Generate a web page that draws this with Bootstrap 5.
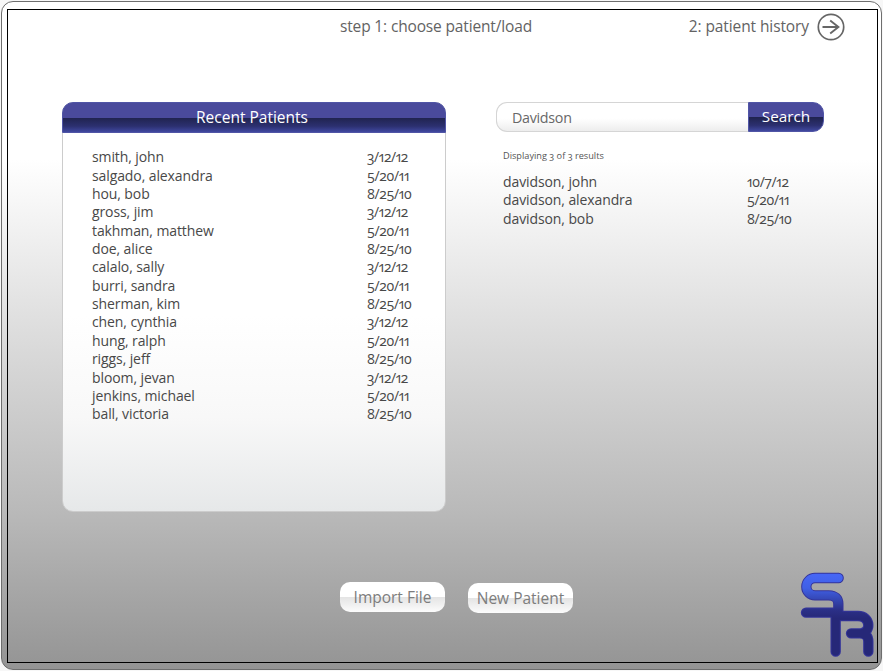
<!DOCTYPE html>
<html lang="en">
<head>
<meta charset="utf-8">
<meta name="viewport" content="width=device-width, initial-scale=1">
<title>Choose patient</title>
<link href="https://cdn.jsdelivr.net/npm/bootstrap@5.3.0/dist/css/bootstrap.min.css" rel="stylesheet">
<style>
body{background:#f7f7f7;font-family:"Open Sans","Noto Sans",sans-serif;color:#484848;height:671px;overflow:hidden;padding:1px}
.frame{width:881px;height:669px;border:1px solid #6e6e6e;border-radius:12px;padding:7px 3px 6px 5px;background:linear-gradient(#fff 0,#fff 158px,#b9b9b9 510px,#949494 668px)}
.screen{height:654px;border:1px solid #000;padding:0 32px 0 54px}
.steps{height:34px;font-size:15.5px;color:#636363}
.step-now{margin-left:278px;width:192px;white-space:nowrap;letter-spacing:-.15px}
.step-next{margin-left:auto;margin-right:8px;white-space:nowrap;letter-spacing:-.1px}
.main-area{margin-top:58px;gap:50px;height:410px}
.recent{width:384px;height:410px;border-radius:11px;border:1px solid #ccc;background:linear-gradient(#fff 0,#fff 52%,#f8f8f8 77%,#e6e8e9 100%)}
.blue-bar{background:linear-gradient(#4a4a9c 0,#4a4a9c 50%,#20234f 51%,#2c3070 80%,#4048a0 100%);color:#fff;border:1px solid #5055a6}
.recent-title{height:31px;margin:-1px -1px 0;border-radius:11px 11px 0 0;font-size:15.5px;padding:1px 4px 0 0}
.entries{font-size:14px;line-height:18.35px}
.entries span{white-space:nowrap}
.recent .entries{padding:15.4px 0 0 29px}
.entry-name{letter-spacing:-.1px}
.entry-date{font-feature-settings:"onum" 1,"pnum" 1;letter-spacing:-.4px}
.recent .entry-name{width:275px}
.found{width:328px}
.query{height:30px;border:1px solid #d5d5d5;border-right:0;border-radius:11px 0 0 11px;background:linear-gradient(#fff 55%,#ededed);font-size:14.3px;letter-spacing:-.3px;color:#686868;padding:0 15px;box-shadow:none!important}
.go{height:30px;width:76px;border-radius:0 11px 11px 0!important;font-size:15.3px;padding:0;line-height:1}
.total{font-size:9.2px;line-height:12px;margin:18px 0 11px 7px;color:#555;font-feature-settings:"onum" 1,"pnum" 1}
.found .entry-name{width:244px}
.found .entries{padding-left:7px}
.actions{margin:70px 0 0 278px;gap:23px}
.pill{width:105px;height:30px;border:0;border-radius:10px;background:linear-gradient(#fff 50%,#e4e4e4 51%,#fcfcfc);color:#7d7d7d;font-size:15.5px;padding:1px 0 0;line-height:1;white-space:nowrap}
.pill:last-child{margin-top:1px}
.brand-mark{position:absolute;left:783px;top:560px}
</style>
</head>
<body>
<div class="frame">
<div class="screen">
  <header class="steps d-flex align-items-center">
    <span class="step-now">step 1: choose patient/load</span>
    <span class="step-next">2: patient history</span>
    <svg width="28" height="28" viewBox="0 0 28 28" fill="none" stroke="#666"><circle cx="14" cy="14" r="12.7" stroke-width="1.7"/><path d="M5.5 14H21M13.2 7.6 21.4 14 13.2 20.4" stroke-width="1.9"/></svg>
  </header>
  <main class="main-area d-flex">
    <section class="recent">
      <div class="recent-title blue-bar d-flex align-items-center justify-content-center"><span>Recent Patients</span></div>
      <div class="entries">
        <div class="d-flex"><span class="entry-name">smith, john</span><span class="entry-date">3/12/12</span></div>
        <div class="d-flex"><span class="entry-name">salgado, alexandra</span><span class="entry-date">5/20/11</span></div>
        <div class="d-flex"><span class="entry-name">hou, bob</span><span class="entry-date">8/25/10</span></div>
        <div class="d-flex"><span class="entry-name">gross, jim</span><span class="entry-date">3/12/12</span></div>
        <div class="d-flex"><span class="entry-name">takhman, matthew</span><span class="entry-date">5/20/11</span></div>
        <div class="d-flex"><span class="entry-name">doe, alice</span><span class="entry-date">8/25/10</span></div>
        <div class="d-flex"><span class="entry-name">calalo, sally</span><span class="entry-date">3/12/12</span></div>
        <div class="d-flex"><span class="entry-name">burri, sandra</span><span class="entry-date">5/20/11</span></div>
        <div class="d-flex"><span class="entry-name">sherman, kim</span><span class="entry-date">8/25/10</span></div>
        <div class="d-flex"><span class="entry-name">chen, cynthia</span><span class="entry-date">3/12/12</span></div>
        <div class="d-flex"><span class="entry-name">hung, ralph</span><span class="entry-date">5/20/11</span></div>
        <div class="d-flex"><span class="entry-name">riggs, jeff</span><span class="entry-date">8/25/10</span></div>
        <div class="d-flex"><span class="entry-name">bloom, jevan</span><span class="entry-date">3/12/12</span></div>
        <div class="d-flex"><span class="entry-name">jenkins, michael</span><span class="entry-date">5/20/11</span></div>
        <div class="d-flex"><span class="entry-name">ball, victoria</span><span class="entry-date">8/25/10</span></div>
      </div>
    </section>
    <section class="found">
      <div class="input-group flex-nowrap">
        <input class="form-control query" value="Davidson" aria-label="Patient name">
        <button class="btn go blue-bar" type="button">Search</button>
      </div>
      <p class="total">Displaying 3 of 3 results</p>
      <div class="entries">
        <div class="d-flex"><span class="entry-name">davidson, john</span><span class="entry-date">10/7/12</span></div>
        <div class="d-flex"><span class="entry-name">davidson, alexandra</span><span class="entry-date">5/20/11</span></div>
        <div class="d-flex"><span class="entry-name">davidson, bob</span><span class="entry-date">8/25/10</span></div>
      </div>
    </section>
  </main>
  <footer class="actions d-flex align-items-start">
    <button class="btn pill" type="button">Import File</button>
    <button class="btn pill" type="button">New Patient</button>
  </footer>
</div>
</div>
<svg class="brand-mark" width="96" height="100" viewBox="0 0 288 300" fill="none" stroke-linejoin="round" role="img" aria-label="SR">
  <defs>
    <linearGradient id="ink" gradientUnits="userSpaceOnUse" x1="0" y1="45" x2="0" y2="175"><stop offset="0" stop-color="#4666f4"/><stop offset=".3" stop-color="#4060e6"/><stop offset=".8" stop-color="#2b3088"/><stop offset="1" stop-color="#262878"/></linearGradient>
    <g id="letters" stroke-linecap="round"><path d="M167 54H96A26 26 0 0 0 96 106H137Q166 107 166 132V158H69"/><path d="M158 275V168H225C265 168 265 220 232 220H204M232 220Q256 222 256 245V275"/></g>
  </defs>
  <use href="#letters" stroke="#34349a" stroke-width="31"/>
  <use href="#letters" stroke="url(#ink)" stroke-width="25"/>
</svg>
<script src="https://cdn.jsdelivr.net/npm/bootstrap@5.3.0/dist/js/bootstrap.bundle.min.js"></script>
</body>
</html>
